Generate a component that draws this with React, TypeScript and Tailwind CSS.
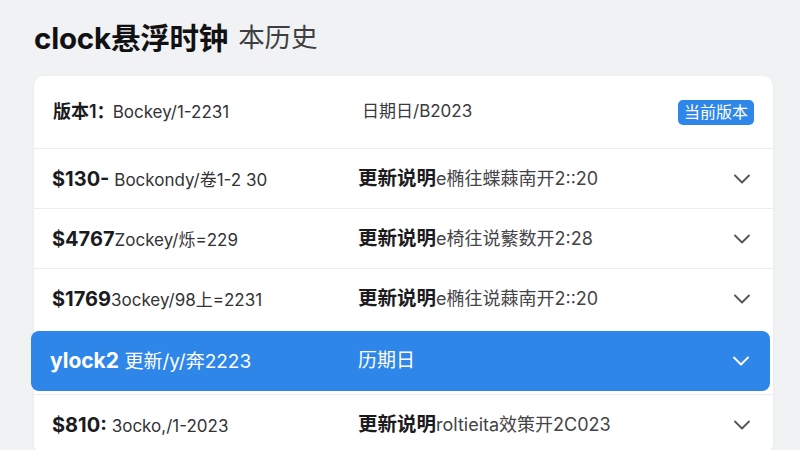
import { ChevronDown } from "lucide-react"

interface Row {
    lead: string
    rest: string
    label: string
    note: string
    active?: boolean
}

const rows: Row[] = [
    { lead: "$130-", rest: " Bockondy/卷1-2 30", label: "更新说明", note: "e椭往蝶蕀南开2::20" },
    { lead: "$4767", rest: "Zockey/烁=229", label: "更新说明", note: "e椅往说蘩数开2:28" },
    { lead: "$1769", rest: "3ockey/98上=2231", label: "更新说明", note: "e椭往说蕀南开2::20" },
    { lead: "ylock2", rest: " 更新/y/奔2223", label: "历期日", note: "", active: true },
    { lead: "$810:", rest: " 3ocko,/1-2023", label: "更新说明", note: "roltieita效策开2C023" },
]

const VersionRow = ({ row }: { row: Row }) => {
    if (row.active) {
        return (
            <div className="ml-[-3px] mr-[3px] my-[3px] h-[60px] flex items-center pl-[19px] pr-[15px] bg-[#2f86e9] rounded-[8px] text-white">
                <div className="w-[308px] shrink-0 whitespace-nowrap">
                    <span className="text-[21px] font-bold">{row.lead}</span>
                    <span className="text-[19px]">{row.rest}</span>
                </div>
                <div className="flex-1 text-[19px] whitespace-nowrap">{row.label}</div>
                <ChevronDown className="size-[28px]" strokeWidth={1.6} />
            </div>
        )
    }
    return (
        <div className="h-[60px] flex items-center pl-[18px] pr-[17px] border-t border-[#ececee]">
            <div className="w-[306px] shrink-0 whitespace-nowrap text-[#1b1b1d]">
                <span className="text-[20px] font-bold">{row.lead}</span>
                <span className="text-[17px] text-[#333336]">{row.rest}</span>
            </div>
            <div className="flex-1 whitespace-nowrap">
                <span className="text-[19.5px] font-semibold text-[#1b1b1d]">{row.label}</span>
                <span className="text-[18px] text-[#444447]">{row.note}</span>
            </div>
            <ChevronDown className="size-[28px] text-[#555558]" strokeWidth={1.6} />
        </div>
    )
}

export default function App() {
    return (
        <div
            className="w-[800px] h-[450px] overflow-hidden bg-[#f1f2f4] pl-[34px] pr-[27px] pt-[20px]"
            style={{ fontFamily: '"Inter", "Noto Sans CJK SC", sans-serif' }}
        >
            <h1 className="h-[36px] flex items-center whitespace-nowrap">
                <span className="text-[29.5px] font-bold text-[#111113] tracking-[-0.2px]">clock悬浮时钟</span>
                <span className="text-[26.5px] text-[#3f3f42] ml-[10px]">本历史</span>
            </h1>
            <div className="mt-[20px] bg-white rounded-[10px] shadow-[0_1px_3px_rgba(0,0,0,0.06)]">
                <div className="h-[72px] flex items-center pl-[19px] pr-[19px]">
                    <div className="w-[309px] shrink-0 whitespace-nowrap text-[#1b1b1d]">
                        <span className="text-[18px] font-semibold">版本1：</span>
                        <span className="text-[17px] text-[#333336] ml-[-2px]">Bockey/1-2231</span>
                    </div>
                    <div className="flex-1 text-[17px] text-[#3a3a3c] whitespace-nowrap">日期日/B2023</div>
                    <span className="h-[25px] px-[6px] flex items-center rounded-[5px] bg-[#2f86e9] text-white text-[16px]">当前版本</span>
                </div>
                {rows.map((row, i) => (
                    <VersionRow key={i} row={row} />
                ))}
            </div>
        </div>
    )
}
